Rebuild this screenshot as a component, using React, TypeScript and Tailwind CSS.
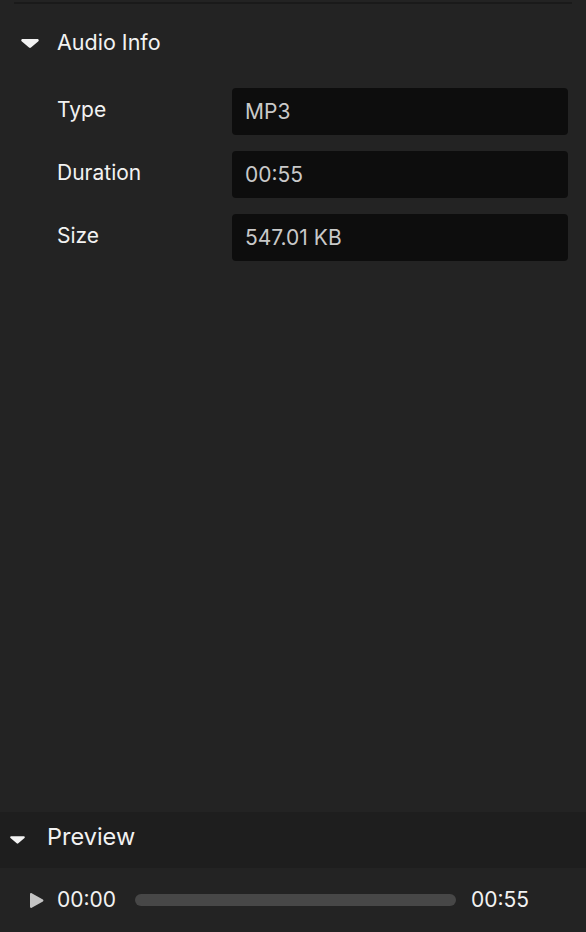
import React from "react";

const rows = [
  { label: "Type", value: "MP3" },
  { label: "Duration", value: "00:55" },
  { label: "Size", value: "547.01 KB" },
];

const Caret = ({ className }: { className: string }) => (
  <svg viewBox="0 0 18 9" className={className} fill="currentColor">
    <path d="M1.6 0h14.8c1.2 0 1.8 1.4 1 2.2l-7.4 6.3a1.5 1.5 0 0 1-2 0L.6 2.2C-.2 1.4.4 0 1.6 0z" />
  </svg>
);

export default function App() {
  return (
    <div
      className="flex h-[932px] w-[586px] flex-col overflow-hidden bg-[#232323] text-[#f2f2f2]"
      style={{ fontFamily: "Inter, 'Noto Sans', sans-serif" }}
    >
      {/* Audio info section */}
      <div className="flex-1">
        <div className="mx-[14px] mt-[2px] h-[2px] bg-[#1a1a1a]" />
        <div className="flex h-[80px] items-center pb-[2px] pl-[21px]">
          <Caret className="h-[9px] w-[18px] text-[#f2f2f2]" />
          <span className="ml-[18px] text-[21.5px] leading-none">Audio Info</span>
        </div>
        <div className="mt-[4px] flex flex-col gap-[16px] pl-[57px] pr-[18px]">
          {rows.map((r) => (
            <div key={r.label} className="flex items-center">
              <div className="w-[175px] pb-[4px] text-[21px]">{r.label}</div>
              <div className="flex h-[47px] flex-1 items-center rounded-[4px] bg-[#0d0d0d] px-[13px] text-[21px] text-[#c9c9c9]">
                {r.value}
              </div>
            </div>
          ))}
        </div>
      </div>

      {/* Preview section */}
      <div className="flex h-[56px] items-center bg-[#1e1e1e] pl-[10px]">
        <Caret className="h-[8px] w-[15px] text-[#f2f2f2]" />
        <span className="mb-[7px] ml-[22px] text-[23.5px] leading-none">Preview</span>
      </div>
      <div className="flex h-[64px] items-center pl-[30px] pr-[57px]">
        <svg viewBox="0 0 14 15" className="h-[15px] w-[14px] text-[#c4c4c4]" fill="currentColor">
          <path d="M0 1.2v12.6c0 .9 1 1.4 1.7.9l11.2-6.3c.7-.4.7-1.4 0-1.8L1.7.3C1 -.2 0 .3 0 1.2z" />
        </svg>
        <span className="ml-[13px] text-[21px]">00:00</span>
        <div className="ml-[19px] h-[12px] flex-1 rounded-full bg-[#474747]" />
        <span className="ml-[15px] text-[21px]">00:55</span>
      </div>
    </div>
  );
}
